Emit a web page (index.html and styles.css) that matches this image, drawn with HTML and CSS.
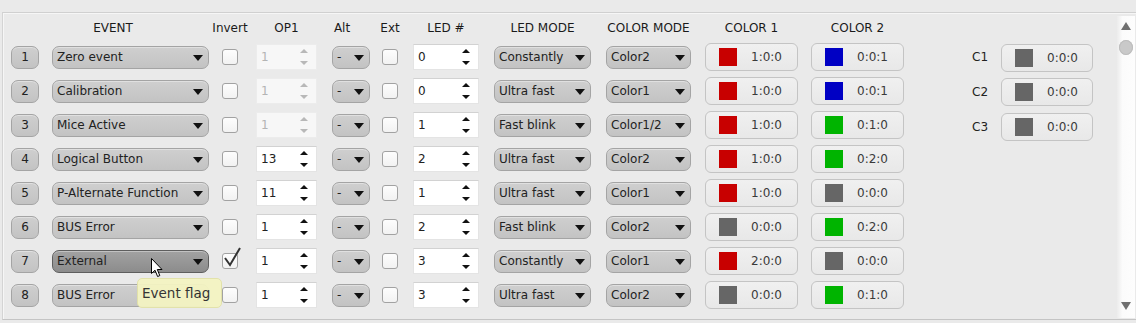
FILE: index.html
```html
<!DOCTYPE html>
<html lang="en">
<head>
    <meta charset="UTF-8" />
    <title>LED Events</title>
    <link rel="stylesheet" href="styles.css">
</head>
<body>
    <div class="panel">
        <div class="table">
            <div class="row head">
                <div class="hd w-num"></div>
                <div class="hd w-event hd-event">EVENT</div>
                <div class="hd w-chk">Invert</div>
                <div class="hd w-op">OP1</div>
                <div class="hd w-alt hd-alt">Alt</div>
                <div class="hd w-chk">Ext</div>
                <div class="hd w-led">LED #</div>
                <div class="hd w-mode">LED MODE</div>
                <div class="hd w-cmode">COLOR MODE</div>
                <div class="hd w-color">COLOR 1</div>
                <div class="hd w-color">COLOR 2</div>
            </div>

            <div class="row">
                <div class="cell"><span class="num w-num">1</span></div>
                <div class="cell"><div class="combo w-event"><span>Zero event</span><i class="caret"></i></div></div>
                <div class="cell"><span class="check"></span></div>
                <div class="cell"><div class="spin w-op off"><span>1</span><i class="arrows"></i></div></div>
                <div class="cell"><div class="combo w-alt"><span>-</span><i class="caret"></i></div></div>
                <div class="cell"><span class="check"></span></div>
                <div class="cell"><div class="spin w-led"><span>0</span><i class="arrows"></i></div></div>
                <div class="cell"><div class="combo w-mode"><span>Constantly</span><i class="caret"></i></div></div>
                <div class="cell"><div class="combo w-cmode"><span>Color2</span><i class="caret"></i></div></div>
                <div class="cell"><div class="cbtn w-color"><i class="sw red"></i>1:0:0</div></div>
                <div class="cell"><div class="cbtn w-color"><i class="sw blue"></i>0:0:1</div></div>
                <div class="cell"><span class="clabel">C1</span></div>
                <div class="cell"><div class="cbtn w-c c-1"><i class="sw gray"></i>0:0:0</div></div>
            </div>

            <div class="row">
                <div class="cell"><span class="num w-num">2</span></div>
                <div class="cell"><div class="combo w-event"><span>Calibration</span><i class="caret"></i></div></div>
                <div class="cell"><span class="check"></span></div>
                <div class="cell"><div class="spin w-op off"><span>1</span><i class="arrows"></i></div></div>
                <div class="cell"><div class="combo w-alt"><span>-</span><i class="caret"></i></div></div>
                <div class="cell"><span class="check"></span></div>
                <div class="cell"><div class="spin w-led"><span>0</span><i class="arrows"></i></div></div>
                <div class="cell"><div class="combo w-mode"><span>Ultra fast</span><i class="caret"></i></div></div>
                <div class="cell"><div class="combo w-cmode"><span>Color1</span><i class="caret"></i></div></div>
                <div class="cell"><div class="cbtn w-color"><i class="sw red"></i>1:0:0</div></div>
                <div class="cell"><div class="cbtn w-color"><i class="sw blue"></i>0:0:1</div></div>
                <div class="cell"><span class="clabel c-2">C2</span></div>
                <div class="cell"><div class="cbtn w-c c-2"><i class="sw gray"></i>0:0:0</div></div>
            </div>

            <div class="row">
                <div class="cell"><span class="num w-num">3</span></div>
                <div class="cell"><div class="combo w-event"><span>Mice Active</span><i class="caret"></i></div></div>
                <div class="cell"><span class="check"></span></div>
                <div class="cell"><div class="spin w-op off"><span>1</span><i class="arrows"></i></div></div>
                <div class="cell"><div class="combo w-alt"><span>-</span><i class="caret"></i></div></div>
                <div class="cell"><span class="check"></span></div>
                <div class="cell"><div class="spin w-led"><span>1</span><i class="arrows"></i></div></div>
                <div class="cell"><div class="combo w-mode"><span>Fast blink</span><i class="caret"></i></div></div>
                <div class="cell"><div class="combo w-cmode"><span>Color1/2</span><i class="caret"></i></div></div>
                <div class="cell"><div class="cbtn w-color"><i class="sw red"></i>1:0:0</div></div>
                <div class="cell"><div class="cbtn w-color"><i class="sw green"></i>0:1:0</div></div>
                <div class="cell"><span class="clabel c-3">C3</span></div>
                <div class="cell"><div class="cbtn w-c c-3"><i class="sw gray"></i>0:0:0</div></div>
            </div>

            <div class="row">
                <div class="cell"><span class="num w-num">4</span></div>
                <div class="cell"><div class="combo w-event"><span>Logical Button</span><i class="caret"></i></div></div>
                <div class="cell"><span class="check"></span></div>
                <div class="cell"><div class="spin w-op"><span>13</span><i class="arrows"></i></div></div>
                <div class="cell"><div class="combo w-alt"><span>-</span><i class="caret"></i></div></div>
                <div class="cell"><span class="check"></span></div>
                <div class="cell"><div class="spin w-led"><span>2</span><i class="arrows"></i></div></div>
                <div class="cell"><div class="combo w-mode"><span>Ultra fast</span><i class="caret"></i></div></div>
                <div class="cell"><div class="combo w-cmode"><span>Color2</span><i class="caret"></i></div></div>
                <div class="cell"><div class="cbtn w-color"><i class="sw red"></i>1:0:0</div></div>
                <div class="cell"><div class="cbtn w-color"><i class="sw green"></i>0:2:0</div></div>
            </div>

            <div class="row">
                <div class="cell"><span class="num w-num">5</span></div>
                <div class="cell"><div class="combo w-event"><span>P-Alternate Function</span><i class="caret"></i></div></div>
                <div class="cell"><span class="check"></span></div>
                <div class="cell"><div class="spin w-op"><span>11</span><i class="arrows"></i></div></div>
                <div class="cell"><div class="combo w-alt"><span>-</span><i class="caret"></i></div></div>
                <div class="cell"><span class="check"></span></div>
                <div class="cell"><div class="spin w-led"><span>1</span><i class="arrows"></i></div></div>
                <div class="cell"><div class="combo w-mode"><span>Ultra fast</span><i class="caret"></i></div></div>
                <div class="cell"><div class="combo w-cmode"><span>Color1</span><i class="caret"></i></div></div>
                <div class="cell"><div class="cbtn w-color"><i class="sw red"></i>1:0:0</div></div>
                <div class="cell"><div class="cbtn w-color"><i class="sw gray"></i>0:0:0</div></div>
            </div>

            <div class="row">
                <div class="cell"><span class="num w-num">6</span></div>
                <div class="cell"><div class="combo w-event"><span>BUS Error</span><i class="caret"></i></div></div>
                <div class="cell"><span class="check"></span></div>
                <div class="cell"><div class="spin w-op"><span>1</span><i class="arrows"></i></div></div>
                <div class="cell"><div class="combo w-alt"><span>-</span><i class="caret"></i></div></div>
                <div class="cell"><span class="check"></span></div>
                <div class="cell"><div class="spin w-led"><span>2</span><i class="arrows"></i></div></div>
                <div class="cell"><div class="combo w-mode"><span>Fast blink</span><i class="caret"></i></div></div>
                <div class="cell"><div class="combo w-cmode"><span>Color2</span><i class="caret"></i></div></div>
                <div class="cell"><div class="cbtn w-color"><i class="sw gray"></i>0:0:0</div></div>
                <div class="cell"><div class="cbtn w-color"><i class="sw green"></i>0:2:0</div></div>
            </div>

            <div class="row">
                <div class="cell"><span class="num w-num">7</span></div>
                <div class="cell"><div class="combo w-event hover"><span>External</span><i class="caret"></i></div></div>
                <div class="cell">
                    <span class="check checked">
                        <svg width="20" height="22" viewBox="0 0 20 22"><path d="M2 11 L7 18 L17 1" fill="none" stroke="#333" stroke-width="2"/></svg>
                    </span>
                </div>
                <div class="cell"><div class="spin w-op"><span>1</span><i class="arrows"></i></div></div>
                <div class="cell"><div class="combo w-alt"><span>-</span><i class="caret"></i></div></div>
                <div class="cell"><span class="check"></span></div>
                <div class="cell"><div class="spin w-led"><span>3</span><i class="arrows"></i></div></div>
                <div class="cell"><div class="combo w-mode"><span>Constantly</span><i class="caret"></i></div></div>
                <div class="cell"><div class="combo w-cmode"><span>Color1</span><i class="caret"></i></div></div>
                <div class="cell"><div class="cbtn w-color"><i class="sw red"></i>2:0:0</div></div>
                <div class="cell"><div class="cbtn w-color"><i class="sw gray"></i>0:0:0</div></div>
            </div>

            <div class="row">
                <div class="cell"><span class="num w-num">8</span></div>
                <div class="cell"><div class="combo w-event"><span>BUS Error</span><i class="caret"></i></div></div>
                <div class="cell"><span class="check"></span></div>
                <div class="cell"><div class="spin w-op"><span>1</span><i class="arrows"></i></div></div>
                <div class="cell"><div class="combo w-alt"><span>-</span><i class="caret"></i></div></div>
                <div class="cell"><span class="check"></span></div>
                <div class="cell"><div class="spin w-led"><span>3</span><i class="arrows"></i></div></div>
                <div class="cell"><div class="combo w-mode"><span>Ultra fast</span><i class="caret"></i></div></div>
                <div class="cell"><div class="combo w-cmode"><span>Color2</span><i class="caret"></i></div></div>
                <div class="cell"><div class="cbtn w-color"><i class="sw gray"></i>0:0:0</div></div>
                <div class="cell"><div class="cbtn w-color"><i class="sw green"></i>0:1:0</div></div>
            </div>
        </div>

        <div class="scroll">
            <i class="sc-up"></i>
            <i class="sc-thumb"></i>
            <i class="sc-down"></i>
        </div>
    </div>

    <div class="tooltip">Event flag</div>
    <svg class="cursor" width="13" height="20" viewBox="0 0 13 20">
        <path d="M0.5 0.5 L0.5 15.5 L4 12.2 L6.6 18.5 L8.8 17.6 L6.3 11.5 L11 11.5 Z" fill="#fff" stroke="#000" stroke-width="1"/>
    </svg>
</body>
</html>
```

FILE: styles.css
```css
body {
    font-family: "DejaVu Sans", Verdana, sans-serif;
    font-size: 12px;
    color: #222;
    background: #eaeaea;
    margin: 0;
    width: 1136px;
    height: 323px;
    overflow: hidden;
    position: relative;
}
.panel {
    display: flex;
    margin: 12px 0 0 2px;
    height: 306px;
    border-top: 1px solid #d0d0d0;
    border-left: 1px solid #d4d4d4;
    border-bottom: 1px solid #c4c4c4;
    box-shadow: inset 1px 1px 0 #f6f6f6;
}
.table {
    flex: 1;
    padding-left: 8px;
}
.row {
    display: grid;
    grid-template-columns: 41px 170px 34px 76px 50px 31px 81px 112px 99px 106px 161px 29px 92px;
    height: 34px;
}
.row.head {
    height: 27px;
}
.cell {
    display: flex;
    align-items: center;
}
.hd {
    display: flex;
    justify-content: center;
    padding-top: 8px;
    line-height: 14px;
    white-space: nowrap;
    color: #1a1a1a;
}
.hd-event { padding-right: 35px; box-sizing: border-box; }
.hd-alt { padding-right: 18px; box-sizing: border-box; }

.w-num { width: 28px; }
.w-event { width: 157px; }
.w-chk { width: 16px; }
.w-op { width: 61px; }
.w-alt { width: 38px; }
.w-led { width: 66px; }
.w-mode { width: 97px; }
.w-cmode { width: 85px; }
.w-color { width: 93px; }
.w-c { width: 92px; }

.num, .combo {
    box-sizing: border-box;
    height: 23px;
    border: 1px solid #a4a4a4;
    border-radius: 7px;
    background: linear-gradient(#cfcfcf, #c3c3c3);
    box-shadow: inset 0 1px 0 rgba(255,255,255,0.35);
}
.num {
    display: flex;
    align-items: center;
    justify-content: center;
}
.combo {
    display: flex;
    align-items: center;
    padding: 0 5px 0 4px;
}
.combo span {
    flex: 1;
    white-space: nowrap;
    overflow: hidden;
}
.combo.hover {
    background: linear-gradient(#a2a2a2, #8c8c8c);
    border-color: #5e5e5e;
}
.caret {
    width: 0;
    height: 0;
    border-left: 5px solid transparent;
    border-right: 5px solid transparent;
    border-top: 6px solid #111;
    margin-top: 1px;
}

.check {
    display: block;
    position: relative;
    box-sizing: border-box;
    width: 16px;
    height: 16px;
    border: 1px solid #a2a2a2;
    border-radius: 3px;
    background: linear-gradient(#fdfdfd, #f2f2f2);
}
.check svg {
    position: absolute;
    left: 0;
    top: -7px;
}

.spin {
    display: flex;
    align-items: center;
    box-sizing: border-box;
    height: 26px;
    padding: 0 8px 0 4px;
    background: #fff;
    border: 1px solid #e4e4e4;
    border-top-color: #d2d2d2;
}
.spin span { flex: 1; }
.arrows {
    display: flex;
    flex-direction: column;
    gap: 8px;
}
.arrows::before, .arrows::after {
    content: "";
    width: 0;
    height: 0;
    border-left: 4px solid transparent;
    border-right: 4px solid transparent;
}
.arrows::before { border-bottom: 4px solid #111; }
.arrows::after { border-top: 4px solid #111; }
.spin.off {
    background: #f7f7f7;
    border-color: #ececec;
    color: #b4b4b4;
}
.spin.off .arrows::before { border-bottom-color: #b8b8b8; }
.spin.off .arrows::after { border-top-color: #b8b8b8; }

.cbtn {
    display: flex;
    align-items: center;
    gap: 14px;
    box-sizing: border-box;
    height: 28px;
    padding-left: 13px;
    border: 1px solid #c4c4c4;
    border-radius: 6px;
    background: linear-gradient(#f0f0f0, #e8e8e8);
    color: #3a3a3a;
}
.cbtn.c-1 { margin-top: 2px; }
.cbtn.c-2, .clabel.c-2 { margin-top: 2px; }
.cbtn.c-3, .clabel.c-3 { margin-top: 4px; }
.sw {
    width: 18px;
    height: 18px;
}
.sw.red { background: #c80000; }
.sw.blue { background: #0000c4; }
.sw.green { background: #00b400; }
.sw.gray { background: #666; }
.clabel { color: #222; }

.scroll {
    position: relative;
    width: 18px;
    margin: 3px 1px 1px 0;
    background: linear-gradient(to right, #ececec, #fbfbfb 30%, #fdfdfd);
}
.scroll i { position: absolute; display: block; }
.sc-up, .sc-down {
    left: 4px;
    width: 0;
    height: 0;
    border-left: 5px solid transparent;
    border-right: 5px solid transparent;
}
.sc-up { top: 6px; border-bottom: 8px solid #707070; }
.sc-down { bottom: 8px; border-top: 8px solid #707070; }
.sc-thumb {
    top: 24px;
    left: 2px;
    width: 14px;
    height: 15px;
    border-radius: 50%;
    background: #c9c9c9;
    box-shadow: inset 0 0 0 1px #bdbdbd;
}

.tooltip {
    position: absolute;
    left: 137px;
    top: 278px;
    width: 85px;
    height: 30px;
    box-sizing: border-box;
    padding-left: 4px;
    line-height: 28px;
    font-size: 13.5px;
    color: #2e2e2e;
    background: #f4f4c2;
    border: 1px solid #e2e2a8;
    border-radius: 5px;
    opacity: 0.95;
}
.cursor {
    position: absolute;
    left: 151px;
    top: 258px;
}
```
